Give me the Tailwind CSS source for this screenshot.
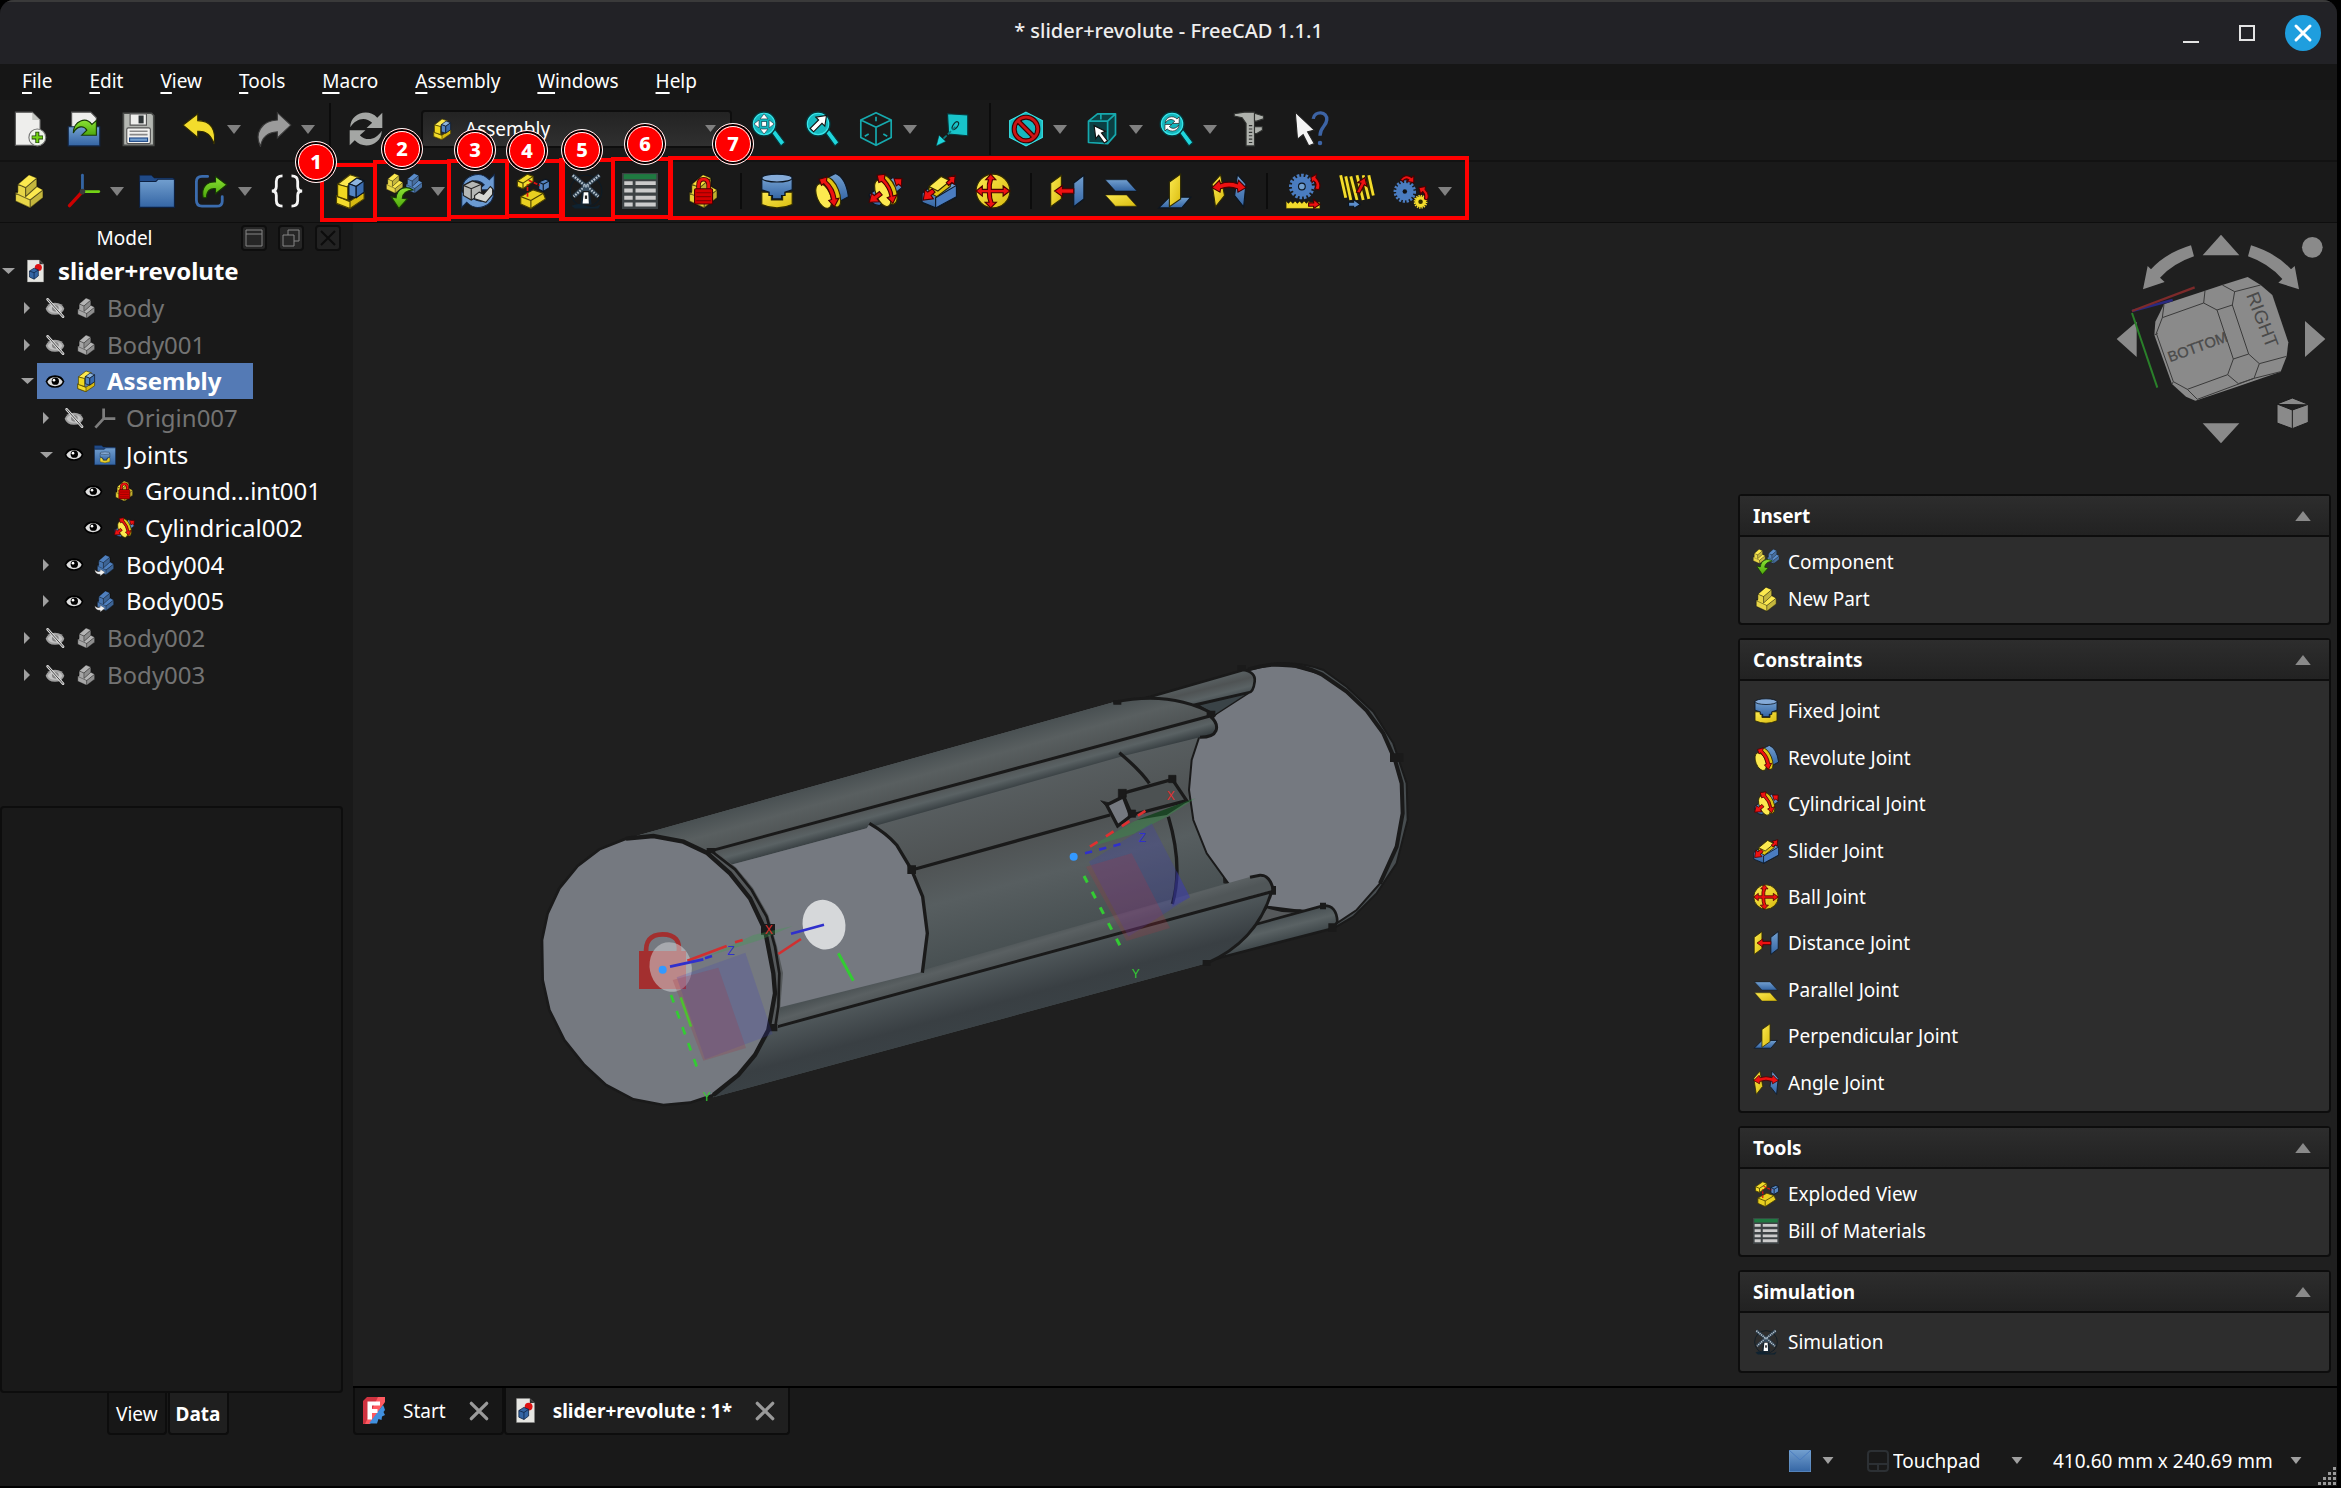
<!DOCTYPE html>
<html lang="en">
  <head>
    <meta charset="utf-8" />
    <title>* slider+revolute - FreeCAD 1.1.1</title>
    <script src="https://cdn.jsdelivr.net/npm/@tailwindcss/browser@4"></script>
  </head>
  <body class="bg-black">
    <!-- icon library; zero-sized instead of hidden so the gradients keep working -->
    <svg class="absolute size-0" aria-hidden="true">
      <defs>
        <linearGradient id="gy" x1="0" y1="0" x2="1" y2="1"><stop offset="0" stop-color="#fce94f" /><stop offset="1" stop-color="#d9bc10" /></linearGradient>
        <linearGradient id="gb" x1="0" y1="0" x2="0" y2="1"><stop offset="0" stop-color="#729fcf" /><stop offset="1" stop-color="#3465a4" /></linearGradient>
        <linearGradient id="gg" x1="0" y1="0" x2="0" y2="1"><stop offset="0" stop-color="#8ae234" /><stop offset="1" stop-color="#4ea80b" /></linearGradient>

        <symbol id="down" viewBox="0 0 14 9"><path d="M0 0H14L7 9Z" /></symbol>
        <symbol id="up" viewBox="0 0 14 9"><path d="M0 9H14L7 0Z" /></symbol>

        <symbol id="new" viewBox="0 0 64 64">
          <path d="M6 2H36L50 16V61H6Z" fill="#eeeeec" stroke="#555" stroke-width="2" />
          <path d="M36 2V16H50Z" fill="#c4c6c2" />
          <circle cx="45" cy="47" r="15" fill="#eef3ea" stroke="#777" stroke-width="2" />
          <path d="M45 37V57M35 47H55" stroke="#173a04" stroke-width="7" />
          <path d="M45 38V56M36 47H54" stroke="#73d216" stroke-width="4" />
        </symbol>
        <symbol id="open" viewBox="0 0 64 64">
          <path d="M10 2H44L54 12V44H10Z" fill="#eeeeec" stroke="#555" stroke-width="2" />
          <path d="M4 28H60V62H4Z" fill="url(#gb)" stroke="#13294a" stroke-width="2" />
          <path d="M13 39C14 16 36 10 46 24L54 17V43H28L37 34C31 24 19 27 13 39Z" fill="url(#gg)" stroke="#173a04" stroke-width="2" />
        </symbol>
        <symbol id="save" viewBox="0 0 64 64">
          <path d="M6 4H56L60 8V61H6Z" fill="#b4b7b2" stroke="#4a4c4a" stroke-width="3" />
          <path d="M18 5H47V25H18Z" fill="#eeeeec" stroke="#555" stroke-width="2" />
          <rect x="33" y="8" width="9" height="14" fill="#2e3436" />
          <rect x="12" y="30" width="42" height="28" rx="3" fill="#f2f2f0" stroke="#555" stroke-width="2" />
          <path d="M17 36H49M17 42H49" stroke="#888" stroke-width="3" />
          <rect x="17" y="48" width="32" height="6" fill="#729fcf" stroke="#204a87" stroke-width="2" />
        </symbol>
        <symbol id="undo" viewBox="0 0 64 64">
          <path d="M2 25L28 5V17C52 17 61 34 57 59C52 42 43 35 28 36V47Z" fill="#f3dc2c" stroke="#302b00" stroke-width="2" />
        </symbol>
        <symbol id="redo" viewBox="0 0 64 64">
          <path d="M62 25L38 3V16C10 17 -4 40 8 63C11 46 21 38 38 37V48Z" fill="#9b9b9b" stroke="#3a3a3a" stroke-width="2" />
        </symbol>
        <symbol id="refresh" viewBox="0 0 64 64">
          <path d="M4 29C4 4 36-6 52 12L61 3V30H33L43 21C31 9 14 13 4 29Z" />
          <path d="M60 35C60 60 28 70 12 52L3 61V34H31L21 43C33 55 50 51 60 35Z" />
        </symbol>
        <symbol id="lens" viewBox="0 0 64 64">
          <path d="M37 37L44 32L62 56L55 62Z" fill="#1fd6dc" stroke="#06363a" stroke-width="2" />
          <circle cx="25" cy="23" r="21" fill="#16b8bf" stroke="#06363a" stroke-width="3" />
          <circle cx="25" cy="23" r="19" fill="none" stroke="#39e6ea" stroke-width="2" />
        </symbol>
        <symbol id="fit" viewBox="0 0 64 64">
          <use href="#lens" />
          <path d="M25 5L32 14H18ZM25 41L32 32H18ZM7 23L16 16V30ZM43 23L34 16V30Z" fill="#fff" stroke="#123" stroke-width="1" />
          <rect x="21" y="19" width="8" height="8" fill="#fff" stroke="#123" stroke-width="1" />
        </symbol>
        <symbol id="fitsel" viewBox="0 0 64 64">
          <use href="#lens" />
          <path d="M11 31L26 16L21 11L40 8L37 27L32 22L17 37Z" fill="#fff" stroke="#111" stroke-width="2" />
        </symbol>
        <symbol id="iso" viewBox="0 0 64 64">
          <path d="M32 3L59 16V47L32 61L5 47V16ZM5 16L32 29L59 16M32 29V61" fill="none" stroke="#16a9ae" stroke-width="3" stroke-linejoin="round" />
          <path d="M32 10V18M12 45L19 41M52 45L45 41" stroke="#16a9ae" stroke-width="3" />
        </symbol>
        <symbol id="jump" viewBox="0 0 64 64">
          <path d="M24 5L60 7V44L26 41Z" fill="#18c4ca" stroke="#06363a" stroke-width="2" />
          <ellipse cx="38" cy="26" rx="4" ry="8" transform="rotate(35 38 26)" fill="none" stroke="#0a2a2c" stroke-width="2" />
          <path d="M38 28L16 50" stroke="#0d7b80" stroke-width="3" stroke-dasharray="8 3" />
          <path d="M4 62L9 43L21 54Z" fill="#1fd6dc" stroke="#06363a" />
        </symbol>
        <symbol id="drawstyle" viewBox="0 0 64 64">
          <path d="M32 2L61 17V47L32 62L3 47V17Z" fill="#16b8bf" stroke="#39e6ea" stroke-width="2" />
          <circle cx="32" cy="32" r="21" fill="none" stroke="#3a0000" stroke-width="9" />
          <path d="M18 18L46 46" stroke="#3a0000" stroke-width="9" />
          <circle cx="32" cy="32" r="21" fill="none" stroke="#cc1414" stroke-width="5" />
          <path d="M17 17L47 47" stroke="#cc1414" stroke-width="5" />
        </symbol>
        <symbol id="boxsel" viewBox="0 0 64 64">
          <path d="M8 18L24 5H56V42L42 58L8 56Z" fill="#0b3f42" />
          <path d="M8 18H42V58L8 56ZM8 18L24 5H56L42 18M56 5V42L42 58M30 5V15" fill="none" stroke="#16a9ae" stroke-width="3" stroke-linejoin="round" />
          <path d="M18 26L38 36L31 39L42 53L36 57L26 43L21 49Z" fill="#fff" stroke="#111" stroke-width="2" />
        </symbol>
        <symbol id="viewzoom" viewBox="0 0 64 64">
          <use href="#lens" />
          <svg x="11" y="9" width="28" height="28" viewBox="0 0 64 64" fill="#fff" stroke="#222" stroke-width="3"><use href="#refresh" /></svg>
        </symbol>
        <symbol id="caliper" viewBox="0 0 64 64">
          <path d="M4 5L22 2H40V62H25V22L18 12L4 9Z" fill="#aeb1ac" stroke="#303230" stroke-width="2" />
          <path d="M40 4L56 9V14L44 18H40ZM40 28H54V34L44 40H40Z" fill="#aeb1ac" stroke="#303230" stroke-width="2" />
          <path d="M30 26H36M30 32H36M30 38H36M30 44H36M30 50H36M30 56H36" stroke="#303230" stroke-width="2" />
        </symbol>
        <symbol id="whats" viewBox="0 0 64 64">
          <path d="M4 2L38 34L26 37L38 58L28 62L18 42L8 50Z" fill="#f4f4f4" stroke="#222" stroke-width="2" />
          <path d="M36 14C38-1 62 0 60 16C59 28 48 28 48 44" fill="none" stroke="#3d64a5" stroke-width="6" />
          <circle cx="48" cy="57" r="4" fill="#3d64a5" />
        </symbol>

        <symbol id="stair" viewBox="0 0 64 64">
          <path d="M12 20L32 3L46 9L26 26Z" fill="currentColor" />
          <path d="M26 26L46 9V24L26 42Z" fill="currentColor" />
          <path d="M26 26L46 9V24L26 42Z" fill="#000" fill-opacity=".22" />
          <path d="M12 20L26 26V42L34 48V62L8 50V34L12 36Z" fill="currentColor" />
          <path d="M12 20L26 26V42L34 48V62L8 50V34L12 36Z" fill="#000" fill-opacity=".08" />
          <path d="M26 42L46 24L57 30L34 48L10 36Z" fill="currentColor" />
          <path d="M34 48L57 30V44L34 62Z" fill="currentColor" />
          <path d="M34 48L57 30V44L34 62Z" fill="#000" fill-opacity=".22" />
          <path d="M12 20L32 3L46 9V24L57 30V44L34 62L8 50V34L12 33ZM12 20L26 26L46 9M26 26V42L46 24M8 36L34 48L57 30M34 48V62" fill="none" stroke="#000" stroke-opacity=".5" stroke-width="2" stroke-linejoin="round" />
        </symbol>
        <symbol id="axes" viewBox="0 0 64 64">
          <path d="M31 32V4" stroke="#3465a4" stroke-width="5" stroke-linecap="round" />
          <path d="M32 33H60" stroke="#73d216" stroke-width="5" stroke-linecap="round" />
          <path d="M31 33L8 58" stroke="#cc0000" stroke-width="6" stroke-linecap="round" />
          <circle cx="31" cy="33" r="5" fill="#3a3a3a" />
        </symbol>
        <symbol id="axesgray" viewBox="0 0 64 64">
          <path d="M28 34V4M28 34H62M28 34L4 60" stroke="#7d7d7d" stroke-width="8" fill="none" />
        </symbol>
        <symbol id="folder" viewBox="0 0 64 64">
          <path d="M1 4H22L27 9H61V16H1Z" fill="#204a87" stroke="#0d2040" stroke-width="1" />
          <path d="M1 15H30L34 11H63V61H1Z" fill="url(#gb)" stroke="#0d2040" stroke-width="2" />
        </symbol>
        <symbol id="mklink" viewBox="0 0 64 64">
          <path d="M26 6H16Q6 6 6 16V48Q6 59 16 59H42Q52 59 52 50V42" fill="none" stroke="#3b6cae" stroke-width="5" stroke-linecap="round" />
          <path d="M18 44C14 24 26 15 40 16V6L60 21L40 37V28C30 27 24 32 24 44Z" fill="url(#gg)" stroke="#173a04" stroke-width="2" />
        </symbol>
        <symbol id="braces" viewBox="0 0 64 64">
          <path d="M24 5Q13 5 13 15V24Q13 32 5 32Q13 32 13 40V49Q13 59 24 59M40 5Q51 5 51 15V24Q51 32 59 32Q51 32 51 40V49Q51 59 40 59" fill="none" stroke="#f5f5f5" stroke-width="5" />
        </symbol>
        <symbol id="asm" viewBox="0 0 64 64">
          <g stroke="#4a4000" stroke-width="2" stroke-linejoin="round">
            <path d="M8 40L32 50L57 34V46L32 63L8 54Z" fill="#d6b911" />
            <path d="M8 41L32 51V63L8 54Z" fill="#f3dc2c" />
            <path d="M10 20L32 3L48 8L26 25Z" fill="#fce94f" />
            <path d="M10 20L28 25V48L10 42Z" fill="#f0d820" />
            <g stroke="#0b1521">
              <path d="M30 19L44 9L57 14L43 24Z" fill="#8db4de" />
              <path d="M30 19L43 24V44L30 40Z" fill="#5585c2" />
              <path d="M43 24L57 14V34L43 44Z" fill="#3b6cae" />
            </g>
          </g>
        </symbol>
        <symbol id="insert" viewBox="0 0 64 64">
          <svg x="-4" y="-1" width="38" height="38" color="#fce94f"><use href="#stair" /></svg>
          <svg x="31" y="-1" width="38" height="38" color="#5b8dcc"><use href="#stair" /></svg>
          <path d="M48 30C36 22 20 26 18 44L9 42L23 63L38 46L29 45C30 35 37 31 48 30Z" fill="url(#gg)" stroke="#173a04" stroke-width="2" />
        </symbol>
        <symbol id="solve" viewBox="0 0 64 64">
          <g fill="#6b9ad2" stroke="#13294a" stroke-width="2"><use href="#refresh" /></g>
          <path d="M6 22L22 14L38 20V38L20 48L6 40Z" fill="#b5b7b5" stroke="#222" stroke-width="2" />
          <path d="M6 22L20 28L38 20M20 28V47" fill="none" stroke="#222" stroke-width="2" />
          <path d="M34 34L42 38L54 24L58 28V38L46 52L26 46V40Z" fill="#d5d7d3" stroke="#222" stroke-width="2" />
        </symbol>
        <symbol id="explode" viewBox="0 0 64 64">
          <g stroke="#4a4000" stroke-width="2" stroke-linejoin="round">
            <path d="M6 14L24 2L34 6V15L16 28L6 24Z" fill="#f3dc2c" />
            <path d="M6 14L16 18L34 6M16 18V28" fill="none" />
            <path d="M12 42L34 30L52 36L56 46L30 63L12 55Z" fill="#e8cf20" />
            <path d="M12 42L30 49L52 36M30 49V63" fill="none" />
            <g stroke="#0b1521">
              <path d="M44 16L56 11L63 14V26L52 33L44 29Z" fill="#5585c2" />
              <path d="M44 16L52 20L63 14M52 20V33" fill="none" />
            </g>
          </g>
          <path d="M26 13L46 22M24 42V20" stroke="#dd1111" stroke-width="3" stroke-dasharray="7 3" />
        </symbol>
        <symbol id="mill" viewBox="0 0 64 64">
          <circle cx="32" cy="32" r="28" fill="none" stroke="#0d1b26" stroke-width="2" />
          <path d="M6 58Q20 52 32 58T58 56L54 63H12Z" fill="#0f2230" />
          <path d="M25 34H39L42 56H22Z" fill="#122433" />
          <path d="M28 34H36L37 54H26Z" fill="#fff" />
          <rect x="30" y="40" width="4" height="6" fill="#222" />
          <path d="M30 22L8 4M34 22L56 4M30 24L10 42M34 24L54 42" stroke="#2c3e4e" stroke-width="8" />
          <path d="M30 22L8 4M34 22L56 4M30 24L10 42M34 24L54 42" stroke="#b9c6d0" stroke-width="4" stroke-dasharray="3 2" />
          <path d="M25 32L32 17L39 32Z" fill="#33495c" />
          <circle cx="32" cy="23" r="3" fill="#93a7b8" />
        </symbol>
        <symbol id="bom" viewBox="0 0 64 64">
          <rect x="0" y="0" width="64" height="64" fill="#3d4244" />
          <rect x="3" y="2" width="58" height="9" fill="#1f7a41" />
          <path d="M4 18H19M24 18H60M4 31H19M24 31H60M4 44H19M24 44H60M4 56H19M24 56H60" stroke="#cbcbcb" stroke-width="7" />
        </symbol>
        <symbol id="lock" viewBox="0 0 64 64">
          <svg width="64" height="64" color="#f8e23a"><use href="#stair" /></svg>
          <path d="M24 30V22Q24 11 33 11T42 22V30" fill="none" stroke="#4a0000" stroke-width="8" />
          <path d="M24 30V22Q24 11 33 11T42 22V30" fill="none" stroke="#ee1111" stroke-width="5" />
          <rect x="17" y="28" width="32" height="27" rx="2" fill="#d40000" stroke="#4a0000" stroke-width="2" />
          <path d="M20 35H46M20 42H46M20 49H46" stroke="#8a0000" stroke-width="2" />
        </symbol>
        <symbol id="fixed" viewBox="0 0 64 64">
          <path d="M5 34V56Q32 68 59 56V34H46V40H42V48H22V40H18V34Z" fill="url(#gy)" stroke="#302b00" stroke-width="2" />
          <path d="M5 9V30L18 34V40H24V46H40V40H46V34L59 30V9Z" fill="url(#gb)" stroke="#0b1521" stroke-width="2" />
          <ellipse cx="32" cy="9" rx="27" ry="7" fill="#85abd8" stroke="#0b1521" stroke-width="2" />
        </symbol>
        <symbol id="revolute" viewBox="0 0 64 64">
          <path d="M26 8L40 1Q58 8 63 42L48 50Z" fill="url(#gb)" stroke="#0b1521" stroke-width="2" />
          <ellipse cx="34" cy="34" rx="12" ry="28" transform="rotate(-22 34 34)" fill="#e0c413" stroke="#302b00" stroke-width="2" />
          <ellipse cx="19" cy="41" rx="12" ry="23" transform="rotate(-22 19 41)" fill="#fce94f" stroke="#302b00" stroke-width="2" />
          <path d="M11 11L25 7L24 14Q38 26 41 46L46 45L38 60L28 49L33 47Q30 30 19 19L15 22Z" fill="#ee1111" stroke="#4a0000" stroke-width="2" />
        </symbol>
        <symbol id="cyl" viewBox="0 0 64 64">
          <path d="M4 38L46 8Q60 8 62 26L22 58Q4 56 4 38Z" fill="url(#gb)" stroke="#0b1521" stroke-width="2" />
          <ellipse cx="38" cy="30" rx="13" ry="27" transform="rotate(-22 38 30)" fill="#e0c413" stroke="#302b00" stroke-width="2" />
          <ellipse cx="28" cy="36" rx="12" ry="25" transform="rotate(-22 28 36)" fill="#fce94f" stroke="#302b00" stroke-width="2" />
          <path d="M18 4L32 2L31 10Q45 26 46 41L53 39L46 54L36 44L41 42Q38 26 26 15L21 17Z" fill="#ee1111" stroke="#4a0000" stroke-width="2" />
          <path d="M4 52L8 36L13 40L22 33L27 39L18 46L22 51ZM48 10L62 10L61 24L56 20L52 23Z" fill="#ee1111" stroke="#4a0000" stroke-width="2" />
        </symbol>
        <symbol id="slider" viewBox="0 0 64 64">
          <path d="M2 36L12 28L28 36L56 18L63 22V42L26 62L2 52Z" fill="url(#gb)" stroke="#0b1521" stroke-width="2" />
          <path d="M26 44L63 22V42L26 62Z" fill="#4a7cc0" stroke="#0b1521" stroke-width="2" />
          <path d="M14 26L36 6L52 14V24L28 42L14 34Z" fill="#e0c413" stroke="#302b00" stroke-width="2" />
          <path d="M14 24L36 6L52 14L30 32Z" fill="#fce94f" stroke="#302b00" stroke-width="2" />
          <path d="M4 48L7 30L12 34L20 28L25 34L18 40L22 46ZM48 8L61 4L59 20L55 17L49 22L45 17L51 12Z" fill="#ee1111" stroke="#4a0000" stroke-width="2" />
        </symbol>
        <symbol id="ball" viewBox="0 0 64 64">
          <circle cx="32" cy="32" r="30" fill="url(#gy)" stroke="#302b00" stroke-width="2" />
          <path d="M28 2L37 12H31Q28 22 29 29H50V23L62 32L50 41V35H29Q29 46 32 52H38L28 62L18 52H25Q22 44 22 35H13V41L2 32L13 23V29H22Q21 20 24 12H19Z" fill="#ee1111" stroke="#4a0000" stroke-width="2" />
        </symbol>
        <symbol id="dist" viewBox="0 0 64 64">
          <path d="M3 18L22 4V46L3 60Z" fill="url(#gy)" stroke="#302b00" stroke-width="2" />
          <path d="M44 18L62 4V46L44 60Z" fill="url(#gb)" stroke="#0b1521" stroke-width="2" />
          <path d="M10 32L24 22V28H44V36H24V42Z" fill="#ee1111" stroke="#4a0000" stroke-width="2" />
        </symbol>
        <symbol id="parallel" viewBox="0 0 64 64">
          <path d="M4 12H42L60 32H22Z" fill="url(#gb)" stroke="#0b1521" stroke-width="1" />
          <path d="M4 39H42L60 59H22Z" fill="url(#gy)" stroke="#302b00" stroke-width="1" />
        </symbol>
        <symbol id="perp" viewBox="0 0 64 64">
          <path d="M22 43H60L44 62H3Z" fill="url(#gb)" stroke="#0b1521" stroke-width="2" />
          <path d="M22 16L42 2V46L22 60Z" fill="url(#gy)" stroke="#302b00" stroke-width="2" />
        </symbol>
        <symbol id="angle" viewBox="0 0 64 64">
          <path d="M2 20L17 3L24 40L8 60Z" fill="url(#gy)" stroke="#302b00" stroke-width="2" />
          <path d="M62 20L47 3L42 40L58 60Z" fill="url(#gb)" stroke="#0b1521" stroke-width="2" />
          <path d="M2 26L15 13L17 19Q32 14 47 19L49 13L62 26L48 34L47 28Q32 22 17 28L16 34Z" fill="#ee1111" stroke="#4a0000" stroke-width="2" />
        </symbol>
        <symbol id="cog" viewBox="0 0 64 64">
          <circle cx="32" cy="32" r="26" fill="none" stroke="currentColor" stroke-width="9" stroke-dasharray="6 4" />
          <circle cx="32" cy="32" r="24" fill="currentColor" />
        </symbol>
        <symbol id="rack" viewBox="0 0 64 64">
          <svg x="6" y="0" width="48" height="48" color="#4a7cc0"><use href="#cog" /></svg>
          <circle cx="30" cy="24" r="6" fill="#729fcf" stroke="#0b1521" stroke-width="2" />
          <path d="M2 50L6 54L10 50L14 54L18 50L22 54L26 50L30 54L34 50L38 54L42 50L44 52H62V63H2Z" fill="#f3dc2c" stroke="#302b00" stroke-width="1" />
          <path d="M42 53H51V47L62 56L51 63V59H42ZM46 8L56 2L55 8Q66 20 60 30L53 28Q58 18 51 14L48 17Z" fill="#ee1111" stroke="#4a0000" stroke-width="2" />
        </symbol>
        <symbol id="screw" viewBox="0 0 64 64">
          <path d="M3 4L12 44M12 6L21 48M21 6L32 48M32 4L43 48M43 4L53 46M53 4L61 40M12 44L12 6M21 48L21 6M32 48L32 8M43 48L43 6M53 46L53 6" stroke="#302b00" stroke-width="6" />
          <path d="M3 4L12 44M12 6L21 48M21 6L32 48M32 4L43 48M43 4L53 46M53 4L61 40" stroke="#f3dc2c" stroke-width="5" />
          <path d="M31 34L39 18L33 17L46 8L50 24L45 21L37 36Z" fill="#ee1111" stroke="#4a0000" stroke-width="2" />
          <path d="M17 52H26V47L38 56L26 63V59H17Z" fill="#5b8dcc" stroke="#0b1521" stroke-width="2" />
        </symbol>
        <symbol id="gears" viewBox="0 0 64 64">
          <svg x="0" y="12" width="42" height="42" color="#4a7cc0"><use href="#cog" /></svg>
          <circle cx="21" cy="33" r="4" fill="#111" />
          <svg x="36" y="38" width="26" height="26" color="#f3dc2c"><use href="#cog" /></svg>
          <circle cx="49" cy="51" r="4" fill="#302b00" />
          <path d="M13 12Q22 0 33 8L37 5L37 17L25 15L28 12Q22 8 17 15ZM46 26L58 24L57 29Q66 38 61 48L56 46Q58 38 53 33L49 37Z" fill="#ee1111" stroke="#4a0000" stroke-width="2" />
        </symbol>
        <symbol id="doc" viewBox="0 0 48 64">
          <path d="M1 1H35L47 13V63H1Z" fill="#e6e6e2" stroke="#888" stroke-width="1" />
          <path d="M35 1V13H47Z" fill="#333" />
          <circle cx="32" cy="22" r="10" fill="#dd1111" />
          <path d="M7 32L20 24L32 29V46L20 55L7 49Z" fill="#3465a4" stroke="#0d2040" stroke-width="2" />
          <path d="M7 32L20 37L32 29M20 37V55" fill="none" stroke="#0d2040" stroke-width="2" />
        </symbol>
        <symbol id="eye" viewBox="0 0 60 44">
          <path d="M2 22Q8 3 30 3T58 22Q52 41 30 41T2 22Z" fill="#000" />
          <path d="M7 23Q13 9 30 9T53 23Q47 36 30 36T7 23Z" fill="#dedede" />
          <circle cx="31" cy="21" r="11" fill="#000" />
          <circle cx="27" cy="18" r="4" fill="#fff" />
        </symbol>
        <symbol id="eyeoff" viewBox="0 0 60 60">
          <path d="M2 32Q8 14 30 14T58 32Q52 50 30 50T2 32Z" fill="#a0a0a0" />
          <path d="M8 32Q13 20 30 20T52 32Q47 44 30 44T8 32Z" fill="#c4c4c4" />
          <circle cx="31" cy="31" r="10" fill="#858585" />
          <path d="M8 4L54 56" stroke="#ddd" stroke-width="8" stroke-linecap="round" />
          <path d="M8 4L54 56" stroke="#444" stroke-width="3" />
        </symbol>
        <symbol id="joints" viewBox="0 0 64 64">
          <use href="#folder" />
          <svg x="15" y="20" width="34" height="38"><use href="#fixed" /></svg>
        </symbol>
        <symbol id="bodylink" viewBox="0 0 64 64">
          <svg x="2" y="0" width="62" height="62" color="#4f80bf"><use href="#stair" /></svg>
          <path d="M2 46Q8 54 18 50V44L32 53L18 64V59Q4 60 2 46Z" fill="#f2f2f2" stroke="#333" stroke-width="1" />
        </symbol>
        <symbol id="fc" viewBox="0 0 44 54">
          <path d="M8 0H44L8 54H0V8Z" fill="#cf3340" />
          <path d="M30 0H44V10L14 54H4Z" fill="#ff5a60" />
          <path d="M40 16L42 20L44 26L41 30L44 36L38 39L37 46L31 44L28 53H12Z" fill="#4190de" />
          <path d="M9 9H34V17H18V24H29V32H18V45H9Z" fill="#fff" />
        </symbol>
        <symbol id="cross" viewBox="0 0 20 20"><path d="M3 3L17 17M17 3L3 17" fill="none" stroke="currentColor" stroke-width="3" stroke-linecap="round" /></symbol>
      </defs>
    </svg>

    <div class="h-screen w-full bg-black pr-1 pb-[2px]">
      <div class="relative flex h-full flex-col overflow-hidden rounded-t-[14px] bg-[#191919] font-['Noto_Sans',sans-serif] text-[19px] leading-6 text-white">
        <!-- title bar -->
        <header class="grid h-16 shrink-0 grid-cols-[1fr_auto_1fr] items-center border-t-2 border-[#3a3a3a] bg-[#222226]">
          <span></span>
          <h1 class="pb-1 text-xl font-medium text-[#eeeeee]">* slider+revolute - FreeCAD 1.1.1</h1>
          <div class="flex items-center justify-end pr-4">
            <button aria-label="Minimize" class="mr-[30px] flex h-7 w-[26px] items-end justify-center pb-1"><span class="h-[2px] w-4 bg-[#e4e4e4]"></span></button>
            <button aria-label="Maximize" class="mr-[25px] flex size-[26px] items-center justify-center"><span class="size-4 border-2 border-[#e4e4e4]"></span></button>
            <button aria-label="Close" class="flex size-9 items-center justify-center rounded-full bg-[#1f9ede]">
              <svg class="size-5" viewBox="0 0 20 20"><path d="M3 3L17 17M17 3L3 17" stroke="#fff" stroke-width="3" stroke-linecap="round" /></svg>
            </button>
          </div>
        </header>

        <!-- menu bar -->
        <nav class="flex h-9 shrink-0 items-center gap-[37px] bg-[#161616] pb-[2px] pl-[22px]">
          <button><span class="underline decoration-2 underline-offset-4">F</span>ile</button>
          <button><span class="underline decoration-2 underline-offset-4">E</span>dit</button>
          <button><span class="underline decoration-2 underline-offset-4">V</span>iew</button>
          <button><span class="underline decoration-2 underline-offset-4">T</span>ools</button>
          <button><span class="underline decoration-2 underline-offset-4">M</span>acro</button>
          <button><span class="underline decoration-2 underline-offset-4">A</span>ssembly</button>
          <button><span class="underline decoration-2 underline-offset-4">W</span>indows</button>
          <button><span class="underline decoration-2 underline-offset-4">H</span>elp</button>
        </nav>

        <!-- main toolbar -->
        <div class="flex h-[62px] shrink-0 items-center border-b-2 border-[#121212] pb-[2px] pl-[3px]">
          <button aria-label="New" class="flex w-[54px] justify-center"><svg class="size-9"><use href="#new" /></svg></button>
          <button aria-label="Open" class="flex w-[54px] justify-center"><svg class="size-9"><use href="#open" /></svg></button>
          <button aria-label="Save" class="flex w-[54px] justify-center"><svg class="size-9"><use href="#save" /></svg></button>
          <button aria-label="Undo" class="ml-2 flex w-[54px] justify-center"><svg class="size-9"><use href="#undo" /></svg></button>
          <button aria-label="Undo list" class="w-5"><svg class="h-[9px] w-[14px] fill-[#808080]"><use href="#down" /></svg></button>
          <button aria-label="Redo" class="flex w-[54px] justify-center"><svg class="size-9"><use href="#redo" /></svg></button>
          <button aria-label="Redo list" class="w-5"><svg class="h-[9px] w-[14px] fill-[#808080]"><use href="#down" /></svg></button>
          <span class="mr-2 ml-2 h-[52px] w-[2px] bg-[#0c0c0c]"></span>
          <button aria-label="Refresh" class="flex w-[54px] justify-center"><svg class="size-9 fill-[#a4a6a4]"><use href="#refresh" /></svg></button>
          <div class="relative ml-7 flex h-[38px] w-[311px] items-center rounded border-2 border-[#0e0e0e] bg-linear-to-b from-[#232323] to-[#303030]">
            <svg class="ml-2 size-[22px] shrink-0"><use href="#asm" /></svg>
            <select aria-label="Workbench" class="h-full w-full appearance-none bg-transparent pl-3 outline-none">
              <option>Assembly</option>
            </select>
            <svg class="pointer-events-none absolute top-[13px] right-[13px] h-[7px] w-[13px] fill-[#808080]"><use href="#down" /></svg>
          </div>
          <button aria-label="Fit all" class="ml-[9px] flex w-[54px] justify-center"><svg class="size-9"><use href="#fit" /></svg></button>
          <button aria-label="Fit selection" class="flex w-[54px] justify-center"><svg class="size-9"><use href="#fitsel" /></svg></button>
          <button aria-label="Isometric" class="flex w-[54px] justify-center"><svg class="size-9"><use href="#iso" /></svg></button>
          <button aria-label="Views" class="w-[22px]"><svg class="h-[9px] w-[14px] fill-[#808080]"><use href="#down" /></svg></button>
          <button aria-label="Go to linked object" class="flex w-[54px] justify-center"><svg class="size-9"><use href="#jump" /></svg></button>
          <span class="mr-2 ml-[10px] h-[52px] w-[2px] bg-[#0c0c0c]"></span>
          <button aria-label="Draw style" class="flex w-[54px] justify-center"><svg class="size-9"><use href="#drawstyle" /></svg></button>
          <button aria-label="Draw styles" class="w-[22px]"><svg class="h-[9px] w-[14px] fill-[#808080]"><use href="#down" /></svg></button>
          <button aria-label="Box selection" class="flex w-[54px] justify-center"><svg class="size-9"><use href="#boxsel" /></svg></button>
          <button aria-label="Selection modes" class="w-5"><svg class="h-[9px] w-[14px] fill-[#808080]"><use href="#down" /></svg></button>
          <button aria-label="Sync view" class="flex w-[54px] justify-center"><svg class="size-9"><use href="#viewzoom" /></svg></button>
          <button aria-label="Sync options" class="w-5"><svg class="h-[9px] w-[14px] fill-[#808080]"><use href="#down" /></svg></button>
          <button aria-label="Measure" class="flex w-[54px] justify-center"><svg class="size-9"><use href="#caliper" /></svg></button>
          <button aria-label="What's this" class="ml-[7px] flex w-[54px] justify-center"><svg class="size-9"><use href="#whats" /></svg></button>
        </div>

        <!-- assembly toolbar -->
        <div class="flex h-[61px] shrink-0 items-center border-b border-[#0e0e0e] pb-[2px] pl-[2px]">
          <button aria-label="Part" class="flex w-[54px] justify-center"><svg class="size-9 text-[#fce94f]"><use href="#stair" /></svg></button>
          <button aria-label="Datum" class="flex w-[54px] justify-center"><svg class="size-9"><use href="#axes" /></svg></button>
          <button aria-label="Datums" class="w-5"><svg class="h-[9px] w-[14px] fill-[#808080]"><use href="#down" /></svg></button>
          <button aria-label="Group" class="flex w-[54px] justify-center"><svg class="size-9"><use href="#folder" /></svg></button>
          <button aria-label="Make link" class="flex w-[54px] justify-center"><svg class="size-9"><use href="#mklink" /></svg></button>
          <button aria-label="Links" class="w-5"><svg class="h-[9px] w-[14px] fill-[#808080]"><use href="#down" /></svg></button>
          <button aria-label="Variable set" class="ml-[2px] flex w-[54px] justify-center"><svg class="size-9"><use href="#braces" /></svg></button>
          <button aria-label="New assembly" class="ml-[9px] flex w-[54px] justify-center"><svg class="size-9"><use href="#asm" /></svg></button>
          <button aria-label="Insert component" class="flex w-[54px] justify-center"><svg class="size-9"><use href="#insert" /></svg></button>
          <button aria-label="Insert options" class="w-5"><svg class="h-[9px] w-[14px] fill-[#808080]"><use href="#down" /></svg></button>
          <button aria-label="Solve" class="flex w-[54px] justify-center"><svg class="size-9"><use href="#solve" /></svg></button>
          <button aria-label="Exploded view" class="flex w-[54px] justify-center"><svg class="size-9"><use href="#explode" /></svg></button>
          <button aria-label="Simulation" class="flex w-[54px] justify-center"><svg class="size-9"><use href="#mill" /></svg></button>
          <button aria-label="Bill of materials" class="flex w-[54px] justify-center"><svg class="size-9"><use href="#bom" /></svg></button>
          <button aria-label="Toggle grounded" class="ml-[9px] flex w-[54px] justify-center"><svg class="size-9"><use href="#lock" /></svg></button>
          <span class="mr-2 ml-[10px] h-9 w-[2px] bg-[#0c0c0c]"></span>
          <button aria-label="Fixed joint" class="flex w-[54px] justify-center"><svg class="size-9"><use href="#fixed" /></svg></button>
          <button aria-label="Revolute joint" class="flex w-[54px] justify-center"><svg class="size-9"><use href="#revolute" /></svg></button>
          <button aria-label="Cylindrical joint" class="flex w-[54px] justify-center"><svg class="size-9"><use href="#cyl" /></svg></button>
          <button aria-label="Slider joint" class="flex w-[54px] justify-center"><svg class="size-9"><use href="#slider" /></svg></button>
          <button aria-label="Ball joint" class="flex w-[54px] justify-center"><svg class="size-9"><use href="#ball" /></svg></button>
          <span class="mr-2 ml-[10px] h-9 w-[2px] bg-[#0c0c0c]"></span>
          <button aria-label="Distance joint" class="flex w-[54px] justify-center"><svg class="size-9"><use href="#dist" /></svg></button>
          <button aria-label="Parallel joint" class="flex w-[54px] justify-center"><svg class="size-9"><use href="#parallel" /></svg></button>
          <button aria-label="Perpendicular joint" class="flex w-[54px] justify-center"><svg class="size-9"><use href="#perp" /></svg></button>
          <button aria-label="Angle joint" class="flex w-[54px] justify-center"><svg class="size-9"><use href="#angle" /></svg></button>
          <span class="mr-2 ml-[10px] h-9 w-[2px] bg-[#0c0c0c]"></span>
          <button aria-label="Rack and pinion" class="flex w-[54px] justify-center"><svg class="size-9"><use href="#rack" /></svg></button>
          <button aria-label="Screw joint" class="flex w-[54px] justify-center"><svg class="size-9"><use href="#screw" /></svg></button>
          <button aria-label="Gears" class="flex w-[54px] justify-center"><svg class="size-9"><use href="#gears" /></svg></button>
          <button aria-label="Gear joints" class="w-5"><svg class="h-[9px] w-[14px] fill-[#808080]"><use href="#down" /></svg></button>
        </div>

        <div class="flex min-h-0 flex-1">
          <!-- model panel -->
          <aside class="flex w-[353px] shrink-0 flex-col">
            <div class="min-h-0 flex-1">
              <div class="flex h-[30px] items-center pr-3">
                <h2 class="flex-1 pl-2 text-center">Model</h2>
                <div class="flex gap-[11px]">
                  <button aria-label="Overlay" class="flex size-[26px] items-center justify-center rounded border-2 border-[#0e0e0e] bg-[#262626]">
                    <svg class="size-[18px]" viewBox="0 0 18 18" fill="none" stroke="#858585"><path d="M1 1H17V17H1ZM1 5H17" /></svg>
                  </button>
                  <button aria-label="Float" class="flex size-[26px] items-center justify-center rounded border-2 border-[#0e0e0e] bg-[#262626]">
                    <svg class="size-[18px]" viewBox="0 0 18 18" fill="none" stroke="#858585"><path d="M6 6V1H17V12H12M1 6H12V17H1Z" /></svg>
                  </button>
                  <button aria-label="Close panel" class="flex size-[26px] items-center justify-center rounded border-2 border-[#0e0e0e] bg-[#222222]">
                    <svg class="size-[18px]" viewBox="0 0 18 18" stroke="#0c0c0c" stroke-width="2"><path d="M2 2L16 16M16 2L2 16" /></svg>
                  </button>
                </div>
              </div>
              <ul class="grid h-[440px] auto-rows-fr text-2xl leading-8 text-[#737373]">
                <li class="flex items-center font-bold text-white">
                  <span class="flex w-[17px] justify-center"><svg class="h-[6px] w-[13px] fill-[#a0a0a0]" preserveAspectRatio="none" viewBox="0 0 14 9"><path d="M0 0H14L7 9Z" /></svg></span>
                  <svg class="mr-[14px] ml-[10px] h-6 w-[17px]"><use href="#doc" /></svg>slider+revolute
                </li>
                <li class="flex items-center pl-[18px]">
                  <span class="flex w-[18px] justify-center"><svg class="h-3 w-[6px] fill-[#a0a0a0]" viewBox="0 0 6 12"><path d="M0 0V12L6 6Z" /></svg></span>
                  <span class="ml-px flex h-9 items-center gap-[10px] pl-2"><svg class="size-5"><use href="#eyeoff" /></svg><svg class="size-[22px] text-[#b5b5b5]"><use href="#stair" /></svg>Body</span>
                </li>
                <li class="flex items-center pl-[18px]">
                  <span class="flex w-[18px] justify-center"><svg class="h-3 w-[6px] fill-[#a0a0a0]" viewBox="0 0 6 12"><path d="M0 0V12L6 6Z" /></svg></span>
                  <span class="ml-px flex h-9 items-center gap-[10px] pl-2"><svg class="size-5"><use href="#eyeoff" /></svg><svg class="size-[22px] text-[#b5b5b5]"><use href="#stair" /></svg>Body001</span>
                </li>
                <li class="flex items-center pl-[18px] font-bold text-white">
                  <span class="flex w-[18px] justify-center"><svg class="h-[6px] w-[13px] fill-[#a0a0a0]" preserveAspectRatio="none" viewBox="0 0 14 9"><path d="M0 0H14L7 9Z" /></svg></span>
                  <span class="ml-px flex h-9 items-center gap-[10px] bg-[#547ab5] pr-8 pl-2"><svg class="h-[15px] w-5"><use href="#eye" /></svg><svg class="size-[22px]"><use href="#asm" /></svg>Assembly</span>
                </li>
                <li class="flex items-center pl-[37px]">
                  <span class="flex w-[18px] justify-center"><svg class="h-3 w-[6px] fill-[#a0a0a0]" viewBox="0 0 6 12"><path d="M0 0V12L6 6Z" /></svg></span>
                  <span class="ml-px flex h-9 items-center gap-[10px] pl-2"><svg class="size-5"><use href="#eyeoff" /></svg><svg class="size-[22px]"><use href="#axesgray" /></svg>Origin007</span>
                </li>
                <li class="flex items-center pl-[37px] text-white">
                  <span class="flex w-[18px] justify-center"><svg class="h-[6px] w-[13px] fill-[#a0a0a0]" preserveAspectRatio="none" viewBox="0 0 14 9"><path d="M0 0H14L7 9Z" /></svg></span>
                  <span class="ml-px flex h-9 items-center gap-[10px] pl-2"><svg class="h-[15px] w-5"><use href="#eye" /></svg><svg class="size-[22px]"><use href="#joints" /></svg>Joints</span>
                </li>
                <li class="flex items-center pl-[74px] text-white">
                  <span class="ml-px flex h-9 items-center gap-[10px] pl-2"><svg class="h-[15px] w-5"><use href="#eye" /></svg><svg class="size-[22px]"><use href="#lock" /></svg>Ground...int001</span>
                </li>
                <li class="flex items-center pl-[74px] text-white">
                  <span class="ml-px flex h-9 items-center gap-[10px] pl-2"><svg class="h-[15px] w-5"><use href="#eye" /></svg><svg class="size-[22px]"><use href="#cyl" /></svg>Cylindrical002</span>
                </li>
                <li class="flex items-center pl-[37px] text-white">
                  <span class="flex w-[18px] justify-center"><svg class="h-3 w-[6px] fill-[#a0a0a0]" viewBox="0 0 6 12"><path d="M0 0V12L6 6Z" /></svg></span>
                  <span class="ml-px flex h-9 items-center gap-[10px] pl-2"><svg class="h-[15px] w-5"><use href="#eye" /></svg><svg class="size-[22px]"><use href="#bodylink" /></svg>Body004</span>
                </li>
                <li class="flex items-center pl-[37px] text-white">
                  <span class="flex w-[18px] justify-center"><svg class="h-3 w-[6px] fill-[#a0a0a0]" viewBox="0 0 6 12"><path d="M0 0V12L6 6Z" /></svg></span>
                  <span class="ml-px flex h-9 items-center gap-[10px] pl-2"><svg class="h-[15px] w-5"><use href="#eye" /></svg><svg class="size-[22px]"><use href="#bodylink" /></svg>Body005</span>
                </li>
                <li class="flex items-center pl-[18px]">
                  <span class="flex w-[18px] justify-center"><svg class="h-3 w-[6px] fill-[#a0a0a0]" viewBox="0 0 6 12"><path d="M0 0V12L6 6Z" /></svg></span>
                  <span class="ml-px flex h-9 items-center gap-[10px] pl-2"><svg class="size-5"><use href="#eyeoff" /></svg><svg class="size-[22px] text-[#b5b5b5]"><use href="#stair" /></svg>Body002</span>
                </li>
                <li class="flex items-center pl-[18px]">
                  <span class="flex w-[18px] justify-center"><svg class="h-3 w-[6px] fill-[#a0a0a0]" viewBox="0 0 6 12"><path d="M0 0V12L6 6Z" /></svg></span>
                  <span class="ml-px flex h-9 items-center gap-[10px] pl-2"><svg class="size-5"><use href="#eyeoff" /></svg><svg class="size-[22px] text-[#b5b5b5]"><use href="#stair" /></svg>Body003</span>
                </li>
              </ul>
            </div>
            <div class="mr-[10px] min-h-0 flex-1 rounded border-2 border-[#0d0d0d]"></div>
            <div class="flex h-[42px] shrink-0 gap-px pl-[107px]">
              <button class="rounded-b border-2 border-t-0 border-[#0d0d0d] bg-[#171717] px-[7px] pt-px">View</button>
              <button class="rounded-b border-2 border-t-0 border-[#0d0d0d] bg-[#1f1f1f] px-[6px] pt-px font-bold">Data</button>
            </div>
          </aside>

          <main class="flex min-w-0 flex-1 flex-col">
            <section class="relative flex min-h-0 flex-1 items-end justify-end border-b-2 border-black bg-[#1f1f1f] pr-[6px] pb-[13px]">
              <!-- 3D model -->
              <svg class="absolute top-[417px] left-[167px] h-[490px] w-[910px]" viewBox="0 0 2730 1470" font-family="'Liberation Sans', sans-serif" font-size="36">
                <defs>
                  <linearGradient id="topskin" gradientUnits="userSpaceOnUse" x1="1000" y1="405" x2="1030" y2="512"><stop offset="0" stop-color="#495052" /><stop offset=".5" stop-color="#595f60" /><stop offset="1" stop-color="#505556" /></linearGradient>
                  <linearGradient id="lip" gradientUnits="userSpaceOnUse" x1="1000" y1="515" x2="1016" y2="573"><stop offset="0" stop-color="#505455" /><stop offset=".5" stop-color="#5a6264" /><stop offset="1" stop-color="#363d40" /></linearGradient>
                  <linearGradient id="inner" gradientUnits="userSpaceOnUse" x1="1400" y1="445" x2="1530" y2="920"><stop offset="0" stop-color="#585e60" /><stop offset=".35" stop-color="#4f5354" /><stop offset=".6" stop-color="#575e60" /><stop offset="1" stop-color="#474f51" /></linearGradient>
                  <linearGradient id="lip2" gradientUnits="userSpaceOnUse" x1="1000" y1="1043" x2="1016" y2="1096"><stop offset="0" stop-color="#4b5254" /><stop offset=".5" stop-color="#5a6062" /><stop offset="1" stop-color="#505658" /></linearGradient>
                  <linearGradient id="botskin" gradientUnits="userSpaceOnUse" x1="1000" y1="1095" x2="1042" y2="1247"><stop offset="0" stop-color="#50585b" /><stop offset=".7" stop-color="#393f43" /><stop offset="1" stop-color="#3a4145" /></linearGradient>
                  <linearGradient id="rod" gradientUnits="userSpaceOnUse" x1="790" y1="105" x2="807" y2="172"><stop offset="0" stop-color="#5a6264" /><stop offset=".4" stop-color="#4f5354" /><stop offset=".75" stop-color="#5a6264" /><stop offset="1" stop-color="#485053" /></linearGradient>
                  <linearGradient id="rod2" gradientUnits="userSpaceOnUse" x1="1000" y1="822" x2="1018" y2="892"><stop offset="0" stop-color="#485053" /><stop offset=".45" stop-color="#5a6264" /><stop offset="1" stop-color="#3e4649" /></linearGradient>
                </defs>
                <path d="M350 587L1780 187Q1950 160 2080 222L2110 730L2255 755Q2210 905 2060 970L580 1372Z" fill="url(#inner)" />
                <g transform="translate(1320 0)">
                  <path d="M860 90Q980 50 1090 90L1160 140L1240 215L1300 310L1340 430L1343 540L1310 670L1250 760L1180 830L1120 865L1100 840Z" fill="#474d50" stroke="#1a1a1a" stroke-width="6" />
                  <path d="M840 95L930 76L1005 80L1085 103L1160 155L1220 212L1270 280L1305 360L1325 430L1328 520L1310 620L1260 730L1190 810L1130 850L1020 812L920 800L805 730L740 640L700 540L687 450L695 360L718 290L765 225L800 185L870 155Z" fill="#757980" stroke="#1a1a1a" stroke-width="6" />
                  <path d="M865 88Q980 52 1085 103L1160 155L1220 212L1270 280L1305 360L1325 430L1328 520L1310 620L1260 730" fill="none" stroke="#1a1a1a" stroke-width="12" />
                  <path d="M545 178L850 90Q888 96 884 125Q880 158 865 158L700 195Z" fill="url(#rod)" />
                  <path d="M545 178L850 90Q888 96 884 125Q880 158 865 158L700 195" fill="none" stroke="#1a1a1a" stroke-width="8" />
                  <path d="M715 195L865 160L765 225Z" fill="#3a4347" stroke="#1a1a1a" stroke-width="4" />
                  <path d="M920 800Q970 818 1020 812L1040 815L880 858Z" fill="#56595b" stroke="#1a1a1a" stroke-width="8" />
                  <path d="M870 858L1090 797Q1130 795 1132 845L1120 865L780 953Z" fill="url(#rod2)" stroke="#1a1a1a" stroke-width="8" />
                </g>
                <path d="M350 587L1780 187Q1950 150 2080 222L575 632L480 603L400 590Z" fill="url(#topskin)" />
                <path d="M1780 187Q1950 150 2080 222" fill="none" stroke="#1a1a1a" stroke-width="9" />
                <path d="M575 632L2070 228Q2096 250 2088 272Q2080 292 2040 292L1810 348L1040 565L630 675Z" fill="url(#lip)" />
                <path d="M575 632L2070 228Q2096 250 2088 272Q2080 292 2040 292" fill="none" stroke="#1a1a1a" stroke-width="9" />
                <path d="M775 1103L1210 990L2200 708Q2250 705 2260 750L765 1162Z" fill="url(#lip2)" />
                <path d="M2190 712L2220 706Q2250 705 2260 750" fill="none" stroke="#1a1a1a" stroke-width="9" />
                <path d="M765 1162L2255 755Q2210 905 2060 970L580 1372L650 1310L720 1230Z" fill="url(#botskin)" />
                <path d="M765 1162L2255 755Q2210 905 2060 970" fill="none" stroke="#1a1a1a" stroke-width="9" />
                <path d="M630 675L1040 565L1050 550L1130 615L1180 700L1210 780L1222 880L1207 995L775 1103L778 1000L755 880L720 790L680 720Z" fill="#757980" />
                <path d="M1048 550Q1100 580 1130 615L1175 690L1208 770L1222 880L1207 998M1175 690L1770 525M1798 338Q1860 390 1888 430M1945 530Q1990 680 1957 792" fill="none" stroke="#1a1a1a" stroke-width="10" />
                <path d="M570 635L640 690L690 750L735 830L760 920L778 1000L770 1100L762 1165" fill="none" stroke="#55595b" stroke-width="22" />
                <path d="M570 630L645 688L695 750L740 830L765 920L778 1000L775 1100L765 1165" fill="none" stroke="#1a1a1a" stroke-width="8" />
                <path d="M318 596L400 588L490 605L560 638L630 700L690 775L735 870L760 1000L765 1060L745 1170L705 1245L655 1305L580 1365L510 1388L430 1395L340 1378L258 1335L193 1275L133 1200L88 1110L68 1020L66 900L83 820L118 745L173 678L238 628Z" fill="#757980" stroke="#1a1a1a" stroke-width="8" />
                <path d="M318 596L400 588L490 605L560 638L630 700L690 775L735 870L760 1000L765 1060L745 1170L705 1245L655 1305L580 1365" fill="none" stroke="#1a1a1a" stroke-width="13" />
                <g fill="#1a1a1a">
                  <path d="M560 624h26v16h-26zM1162 676h26v26h-26zM723 852h42v32h-42zM750 1152h22v22h-22zM1780 180h24v14h-24zM2152 75h26v16h-26zM2060 212h26v18h-26zM2610 340h40v26h-40zM2254 738h14v26h-14zM2400 788h18v20h-18zM2425 850h24v26h-24zM2048 960h24v18h-24z" />
                </g>
                <!-- slot block -->
                <g transform="translate(1320 0)" stroke="#1a1a1a" stroke-width="10">
                  <path d="M487 460L637 418L680 482L515 525Z" fill="#4c5152" />
                  <path d="M440 495L490 470L512 528L473 558Z" fill="#757980" />
                  <path d="M475 448h24v24h-24zM626 406h22v22h-22zM505 510h22v22h-22zM422 482L445 488L440 500Z" fill="#1a1a1a" stroke-width="2" />
                </g>
                <!-- origin planes and axes, fixed part -->
                <path d="M379 945Q372 883 428 883T476 940" fill="none" stroke="#a32f2f" stroke-width="14" />
                <path d="M357 933H498V1047H357Z" fill="#a32f2f" />
                <ellipse cx="452" cy="981" rx="63" ry="75" transform="rotate(-12 452 981)" fill="#d0d2d4" fill-opacity=".55" />
                <path d="M470 1012L676 938L758 1182L555 1258Z" fill="#3c3cc0" fill-opacity=".2" />
                <path d="M458 1020L595 983L678 1224L550 1262Z" fill="#a03848" fill-opacity=".25" />
                <path d="M560 950L700 885L818 858L720 900Z" fill="#3f9f4f" fill-opacity=".35" />
                <g fill="none" stroke-width="8">
                  <path d="M502 962L620 918M645 907L668 900M775 942L843 897" stroke="#d03030" />
                  <path d="M450 980L550 958M555 955L576 948" stroke="#3030cc" />
                  <path d="M453 1065L530 1280" stroke="#33cc33" stroke-dasharray="24 27" />
                  <path d="M482 1072L513 1160" stroke="#4fc030" />
                </g>
                <circle cx="428" cy="989" r="12" fill="#3399ff" />
                <ellipse cx="912" cy="854" rx="64" ry="75" transform="rotate(-12 912 854)" fill="#d6d8da" />
                <path d="M813 881L912 854" stroke="#3030cc" stroke-width="8" />
                <path d="M955 940L1000 1022" stroke="#33cc33" stroke-width="9" />
                <text x="734" y="881" fill="#e03030">X</text>
                <text x="622" y="946" fill="#3030cc">Z</text>
                <text x="548" y="1382" fill="#33cc33">Y</text>
                <!-- origin planes and axes, sliding part -->
                <g transform="translate(1320 0)">
                  <path d="M388 622L520 545L690 480L708 474L620 530L520 582Z" fill="#2f9f3f" fill-opacity=".35" />
                  <path d="M530 540L690 480L620 525Z" fill="#123a1a" fill-opacity=".8" />
                  <path d="M387 665L575 550L690 772L505 890Z" fill="#3c3cc0" fill-opacity=".25" />
                  <path d="M650 692L690 772L636 800Z" fill="#3c3cb0" fill-opacity=".4" />
                  <path d="M378 680L515 640L630 864L500 903Z" fill="#b03040" fill-opacity=".22" />
                  <path d="M390 620L557 512" stroke="#e03030" stroke-width="8" stroke-dasharray="27 30" />
                  <path d="M375 640L490 610" stroke="#3030cc" stroke-width="8" stroke-dasharray="22 22" />
                  <path d="M372 708L480 917" stroke="#33cc33" stroke-width="9" stroke-dasharray="22 31" />
                  <circle cx="341" cy="650" r="12" fill="#3399ff" />
                  <text x="620" y="480" fill="#e03030">X</text>
                  <text x="536" y="606" fill="#3030cc">Z</text>
                  <text x="515" y="1013" fill="#33cc33">Y</text>
                </g>
              </svg>

              <!-- navigation cube -->
              <svg class="absolute -top-2 right-[-4px] h-60 w-[251px]" viewBox="0 0 753 720" font-family="'Liberation Sans', sans-serif">
                <g fill="#8a8a8a">
                  <path d="M393 59L448 121H338ZM393 685L448 625H338ZM80 372L140 320V426ZM706 372L645 318V426Z" />
                  <path d="M303 91L312 124Q250 145 210 188L224 201L159 223L173 153L183 163Q225 115 303 91Z" />
                  <path d="M483 91L474 124Q535 145 577 192L565 203L627 223L614 153L603 163Q560 115 483 91Z" />
                  <circle cx="667" cy="97" r="31" />
                </g>
                <g fill="#8a8a8a" stroke="#1a1a1a" stroke-width="3" stroke-linejoin="round">
                  <path d="M561 567L607 549L655 568V622L607 641L561 624ZM561 567L607 585L655 568M607 585V641" />
                </g>
                <path d="M345 227L397 210L473 186L512 210L547 240L595 382L590 424L572 470L430 519L316 557L288 545L246 507L193 360L196 320L222 268Z" fill="#8a8a8a" />
                <g fill="none" stroke="#3a3a3a" stroke-width="3">
                  <path d="M222 268L217 308L341 264L345 227M217 308L199 355L250 500L292 523L413 479L430 432L381 285L341 264M381 285L427 270L434 230L397 210M434 230L512 210M427 270L476 417L430 432M476 417L508 446L590 424M508 446L492 490L445 506L413 479M193 360L203 355M292 523L322 553L492 490L572 470M246 507L250 500" />
                </g>
                <text transform="translate(240 442) rotate(-20)" font-size="44" fill="#4a4a4a" stroke="#4a4a4a">BOTTOM</text>
                <text transform="translate(468 240) rotate(69)" font-size="56" fill="#4a4a4a">RIGHT</text>
                <path d="M126 288L248 255" stroke="#2a2a80" stroke-width="7" />
                <path d="M126 288L314 217" stroke="#7d2a2a" stroke-width="7" />
                <path d="M126 294L202 518" stroke="#2a802a" stroke-width="6" />
              </svg>

              <!-- task panel -->
              <div class="flex w-[593px] flex-col gap-[13px]">
                <section class="rounded border-2 border-[#0d0d0d] bg-[#2d2d2d]">
                  <h3 class="flex h-[41px] items-center justify-between border-b-2 border-[#0d0d0d] bg-linear-to-b from-[#2d2d2d] to-[#222222] pr-[18px] pl-[13px] font-bold">Insert<svg class="h-[10px] w-4 fill-[#8a8a8a]"><use href="#up" /></svg></h3>
                  <div class="grid auto-rows-[37px] py-[6px]">
                    <button class="flex items-center gap-[9px] pl-[13px]"><svg class="size-[26px]"><use href="#insert" /></svg>Component</button>
                    <button class="flex items-center gap-[9px] pl-[13px]"><svg class="size-[26px] text-[#fce94f]"><use href="#stair" /></svg>New Part</button>
                  </div>
                </section>
                <section class="rounded border-2 border-[#0d0d0d] bg-[#2d2d2d]">
                  <h3 class="flex h-[41px] items-center justify-between border-b-2 border-[#0d0d0d] bg-linear-to-b from-[#2d2d2d] to-[#222222] pr-[18px] pl-[13px] font-bold">Constraints<svg class="h-[10px] w-4 fill-[#8a8a8a]"><use href="#up" /></svg></h3>
                  <div class="grid h-[430px] auto-rows-fr pt-[7px] pb-[5px]">
                    <button class="flex items-center gap-[9px] pl-[13px]"><svg class="size-[26px]"><use href="#fixed" /></svg>Fixed Joint</button>
                    <button class="flex items-center gap-[9px] pl-[13px]"><svg class="size-[26px]"><use href="#revolute" /></svg>Revolute Joint</button>
                    <button class="flex items-center gap-[9px] pl-[13px]"><svg class="size-[26px]"><use href="#cyl" /></svg>Cylindrical Joint</button>
                    <button class="flex items-center gap-[9px] pl-[13px]"><svg class="size-[26px]"><use href="#slider" /></svg>Slider Joint</button>
                    <button class="flex items-center gap-[9px] pl-[13px]"><svg class="size-[26px]"><use href="#ball" /></svg>Ball Joint</button>
                    <button class="flex items-center gap-[9px] pl-[13px]"><svg class="size-[26px]"><use href="#dist" /></svg>Distance Joint</button>
                    <button class="flex items-center gap-[9px] pl-[13px]"><svg class="size-[26px]"><use href="#parallel" /></svg>Parallel Joint</button>
                    <button class="flex items-center gap-[9px] pl-[13px]"><svg class="size-[26px]"><use href="#perp" /></svg>Perpendicular Joint</button>
                    <button class="flex items-center gap-[9px] pl-[13px]"><svg class="size-[26px]"><use href="#angle" /></svg>Angle Joint</button>
                  </div>
                </section>
                <section class="rounded border-2 border-[#0d0d0d] bg-[#2d2d2d]">
                  <h3 class="flex h-[41px] items-center justify-between border-b-2 border-[#0d0d0d] bg-linear-to-b from-[#2d2d2d] to-[#222222] pr-[18px] pl-[13px] font-bold">Tools<svg class="h-[10px] w-4 fill-[#8a8a8a]"><use href="#up" /></svg></h3>
                  <div class="grid auto-rows-[37px] py-[6px]">
                    <button class="flex items-center gap-[9px] pl-[13px]"><svg class="size-[26px]"><use href="#explode" /></svg>Exploded View</button>
                    <button class="flex items-center gap-[9px] pl-[13px]"><svg class="size-[26px]"><use href="#bom" /></svg>Bill of Materials</button>
                  </div>
                </section>
                <section class="rounded border-2 border-[#0d0d0d] bg-[#2d2d2d]">
                  <h3 class="flex h-[41px] items-center justify-between border-b-2 border-[#0d0d0d] bg-linear-to-b from-[#2d2d2d] to-[#222222] pr-[18px] pl-[13px] font-bold">Simulation<svg class="h-[10px] w-4 fill-[#8a8a8a]"><use href="#up" /></svg></h3>
                  <div class="grid auto-rows-[46px] py-[6px]">
                    <button class="flex items-center gap-[9px] pl-[13px]"><svg class="size-[26px]"><use href="#mill" /></svg>Simulation</button>
                  </div>
                </section>
              </div>
            </section>

            <!-- document tabs -->
            <div class="flex h-[47px] shrink-0">
              <div class="flex items-center rounded-b border-2 border-t-0 border-[#0d0d0d] bg-[#171717] pr-3 pl-2">
                <svg class="h-[27px] w-[22px]"><use href="#fc" /></svg>
                <button class="mr-[22px] ml-[18px]">Start</button>
                <button aria-label="Close Start" class="text-[#9a9a9a]"><svg class="size-[22px]"><use href="#cross" /></svg></button>
              </div>
              <div class="flex items-center rounded-b border-2 border-t-0 border-[#0d0d0d] bg-[#1f1f1f] pr-3 pl-[10px]">
                <svg class="h-[25px] w-[19px]"><use href="#doc" /></svg>
                <button class="mr-[22px] ml-[18px] font-bold">slider+revolute : 1*</button>
                <button aria-label="Close document" class="text-[#9a9a9a]"><svg class="size-[22px]"><use href="#cross" /></svg></button>
              </div>
            </div>
          </main>
        </div>

        <!-- status bar -->
        <footer class="flex h-[51px] shrink-0 items-center justify-end pr-[35px]">
          <button aria-label="Notifications" class="mr-[33px] flex items-center gap-[11px]">
            <svg class="size-[22px]" viewBox="0 0 22 22"><path d="M0 0H22V22H0Z" fill="url(#gb)" stroke="#729fcf" /><path d="M0 0L11 10L22 0" fill="none" stroke="#4a7cc0" /></svg>
            <svg class="h-[7px] w-3 fill-[#a0a0a0]"><use href="#down" /></svg>
          </button>
          <svg class="mr-1 size-[22px]" viewBox="0 0 22 22" fill="none" stroke="#2c3034" stroke-width="2"><rect x="1" y="1" width="20" height="20" rx="3" /><path d="M1 14H21M11 14V21" /></svg>
          <div class="relative mr-[30px] flex items-center">
            <select aria-label="Navigation style" class="w-[130px] appearance-none bg-transparent outline-none"><option>Touchpad</option></select>
            <svg class="pointer-events-none absolute right-0 h-[7px] w-3 fill-[#a0a0a0]"><use href="#down" /></svg>
          </div>
          <div class="relative flex items-center">
            <select aria-label="View dimensions" class="w-[249px] appearance-none bg-transparent outline-none"><option>410.60 mm x 240.69 mm</option></select>
            <svg class="pointer-events-none absolute right-0 h-[7px] w-3 fill-[#a0a0a0]"><use href="#down" /></svg>
          </div>
        </footer>
        <svg class="absolute right-0 bottom-0 size-5 fill-[#9a9a9a]" viewBox="0 0 20 20"><path d="M16 1h3v3h-3zM11 6h3v3h-3zM16 6h3v3h-3zM6 11h3v3h-3zM11 11h3v3h-3zM16 11h3v3h-3zM1 16h3v3h-3zM6 16h3v3h-3zM11 16h3v3h-3zM16 16h3v3h-3z" /></svg>

        <!-- numbered callouts over the toolbar -->
        <div class="pointer-events-none absolute top-[163px] left-[320px] h-[59px] w-[57px] border-4 border-[#ff0000]"></div>
        <div class="pointer-events-none absolute top-[160px] left-[373px] h-[61px] w-[78px] border-4 border-[#ff0000]"></div>
        <div class="pointer-events-none absolute top-[159px] left-[447px] h-[60px] w-[62px] border-4 border-[#ff0000]"></div>
        <div class="pointer-events-none absolute top-[159px] left-[505px] h-[59px] w-[60px] border-4 border-[#ff0000]"></div>
        <div class="pointer-events-none absolute top-[158px] left-[559px] h-[63px] w-[56px] border-4 border-[#ff0000]"></div>
        <div class="pointer-events-none absolute top-[157px] left-[611px] h-[62px] w-[62px] border-4 border-[#ff0000]"></div>
        <div class="pointer-events-none absolute top-[156px] left-[668px] h-[64px] w-[801px] border-4 border-[#ff0000]"></div>
        <span class="absolute top-[141px] left-[295px] flex size-[42px] items-center justify-center rounded-full border border-white bg-[#ff0000] text-xl font-extrabold inset-ring-2 inset-ring-black"><span class="absolute inset-[2px] rounded-full border border-white"></span>1</span>
        <span class="absolute top-[128px] left-[381px] flex size-[42px] items-center justify-center rounded-full border border-white bg-[#ff0000] text-xl font-extrabold inset-ring-2 inset-ring-black"><span class="absolute inset-[2px] rounded-full border border-white"></span>2</span>
        <span class="absolute top-[129px] left-[454px] flex size-[42px] items-center justify-center rounded-full border border-white bg-[#ff0000] text-xl font-extrabold inset-ring-2 inset-ring-black"><span class="absolute inset-[2px] rounded-full border border-white"></span>3</span>
        <span class="absolute top-[130px] left-[506px] flex size-[42px] items-center justify-center rounded-full border border-white bg-[#ff0000] text-xl font-extrabold inset-ring-2 inset-ring-black"><span class="absolute inset-[2px] rounded-full border border-white"></span>4</span>
        <span class="absolute top-[129px] left-[561px] flex size-[42px] items-center justify-center rounded-full border border-white bg-[#ff0000] text-xl font-extrabold inset-ring-2 inset-ring-black"><span class="absolute inset-[2px] rounded-full border border-white"></span>5</span>
        <span class="absolute top-[123px] left-[624px] flex size-[42px] items-center justify-center rounded-full border border-white bg-[#ff0000] text-xl font-extrabold inset-ring-2 inset-ring-black"><span class="absolute inset-[2px] rounded-full border border-white"></span>6</span>
        <span class="absolute top-[123px] left-[712px] flex size-[42px] items-center justify-center rounded-full border border-white bg-[#ff0000] text-xl font-extrabold inset-ring-2 inset-ring-black"><span class="absolute inset-[2px] rounded-full border border-white"></span>7</span>
      </div>
    </div>
  </body>
</html>
